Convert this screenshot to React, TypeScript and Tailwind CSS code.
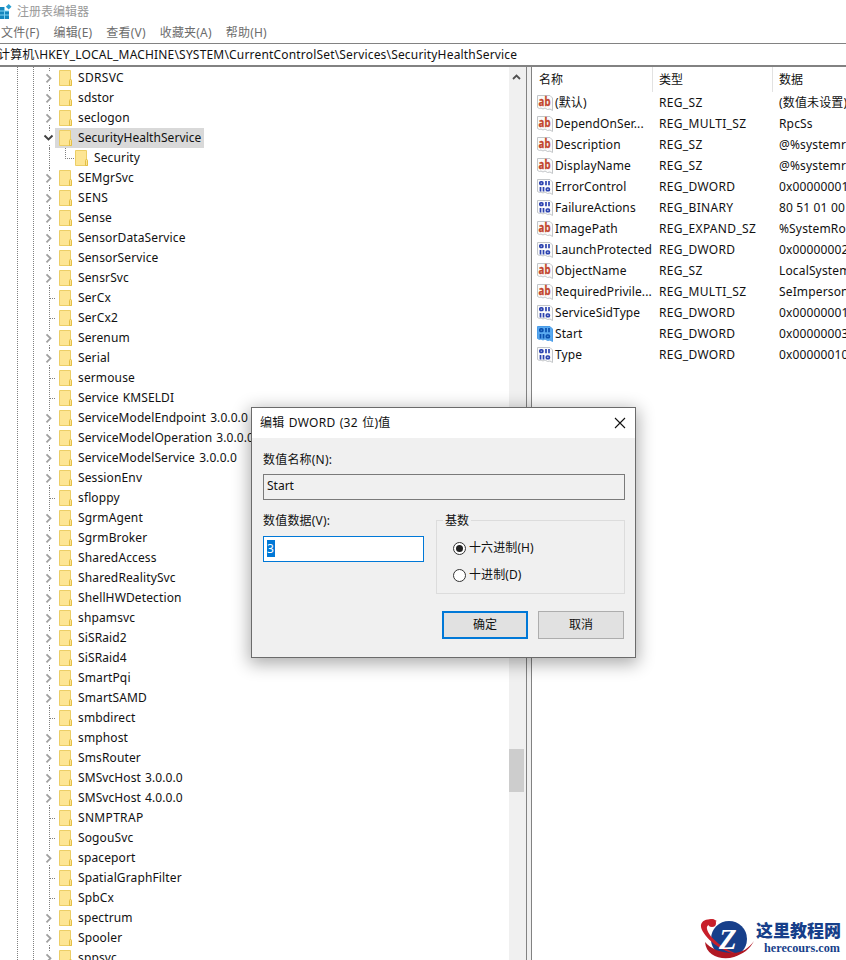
import React from 'react';

interface TreeItem {
  name: string;
  leaf?: boolean;
  open?: boolean;
  child?: boolean;
}

interface RegValue {
  name: string;
  type: string;
  data: string;
  kind: 'text' | 'binary';
  active?: boolean;
}

const tree: TreeItem[] = [
  { name: 'SDRSVC' },
  { name: 'sdstor' },
  { name: 'seclogon' },
  { name: 'SecurityHealthService', open: true },
  { name: 'Security', child: true },
  { name: 'SEMgrSvc' },
  { name: 'SENS' },
  { name: 'Sense' },
  { name: 'SensorDataService' },
  { name: 'SensorService' },
  { name: 'SensrSvc' },
  { name: 'SerCx', leaf: true },
  { name: 'SerCx2', leaf: true },
  { name: 'Serenum' },
  { name: 'Serial' },
  { name: 'sermouse', leaf: true },
  { name: 'Service KMSELDI', leaf: true },
  { name: 'ServiceModelEndpoint 3.0.0.0' },
  { name: 'ServiceModelOperation 3.0.0.0' },
  { name: 'ServiceModelService 3.0.0.0' },
  { name: 'SessionEnv' },
  { name: 'sfloppy', leaf: true },
  { name: 'SgrmAgent' },
  { name: 'SgrmBroker' },
  { name: 'SharedAccess' },
  { name: 'SharedRealitySvc' },
  { name: 'ShellHWDetection' },
  { name: 'shpamsvc' },
  { name: 'SiSRaid2' },
  { name: 'SiSRaid4' },
  { name: 'SmartPqi' },
  { name: 'SmartSAMD' },
  { name: 'smbdirect', leaf: true },
  { name: 'smphost' },
  { name: 'SmsRouter' },
  { name: 'SMSvcHost 3.0.0.0' },
  { name: 'SMSvcHost 4.0.0.0' },
  { name: 'SNMPTRAP', leaf: true },
  { name: 'SogouSvc', leaf: true },
  { name: 'spaceport' },
  { name: 'SpatialGraphFilter', leaf: true },
  { name: 'SpbCx', leaf: true },
  { name: 'spectrum' },
  { name: 'Spooler' },
  { name: 'sppsvc' },
];

const values: RegValue[] = [
  { name: '(默认)', type: 'REG_SZ', data: '(数值未设置)', kind: 'text' },
  { name: 'DependOnSer...', type: 'REG_MULTI_SZ', data: 'RpcSs', kind: 'text' },
  { name: 'Description', type: 'REG_SZ', data: '@%systemr', kind: 'text' },
  { name: 'DisplayName', type: 'REG_SZ', data: '@%systemr', kind: 'text' },
  { name: 'ErrorControl', type: 'REG_DWORD', data: '0x00000001', kind: 'binary' },
  { name: 'FailureActions', type: 'REG_BINARY', data: '80 51 01 00', kind: 'binary' },
  { name: 'ImagePath', type: 'REG_EXPAND_SZ', data: '%SystemRo', kind: 'text' },
  { name: 'LaunchProtected', type: 'REG_DWORD', data: '0x00000002', kind: 'binary' },
  { name: 'ObjectName', type: 'REG_SZ', data: 'LocalSystem', kind: 'text' },
  { name: 'RequiredPrivile...', type: 'REG_MULTI_SZ', data: 'SeImperson', kind: 'text' },
  { name: 'ServiceSidType', type: 'REG_DWORD', data: '0x00000001', kind: 'binary' },
  { name: 'Start', type: 'REG_DWORD', data: '0x00000003', kind: 'binary', active: true },
  { name: 'Type', type: 'REG_DWORD', data: '0x00000010', kind: 'binary' },
];

const menus = ['文件(F)', '编辑(E)', '查看(V)', '收藏夹(A)', '帮助(H)'];

const FolderIcon = () => (
  <svg width="14" height="16" viewBox="0 0 14 16" className="shrink-0">
    <path d="M.5.5h11v9l1 1v5H.5z" fill="#fde594" stroke="#ecce66" />
    <path d="M10.500 15.500v-5l1-1.500 1 1.500v5z" fill="#fde594" stroke="#e3bf45" />
  </svg>
);

const ValueIcon: React.FC<{ kind: RegValue['kind']; active?: boolean }> = ({ kind, active }) => (
  <svg width="16" height="16" viewBox="0 0 16 16" className="shrink-0">
    <path
      d="M.5.5h12.500l2.500 2.500v12.500l-2.500-1.500-2.500.5-2.500-1.500-2 1-2-1-1.500.5-2-1z"
      fill={active ? '#5aaaf0' : '#fbfbfb'}
      stroke={active ? '#4a9ce8' : '#c3c6c9'}
    />
    {kind === 'text' ? (
      <text x="1.600" y="11" fontSize="11.500" fontWeight="700" textLength="12" lengthAdjust="spacingAndGlyphs" fill="#c2452d" stroke="#c2452d" strokeWidth=".3" fontFamily="Noto Sans, sans-serif">ab</text>
    ) : (
      <g stroke={active ? '#0a4fae' : '#2c43b0'} strokeWidth="1.700" fill="none">
        <rect x="2.850" y="2.850" width="3" height="2.600" rx="1" />
        <path d="M9 2v4.300M12 2v4.300M3.500 8v4.500M6.500 8v4.500" />
        <rect x="9.350" y="9" width="3" height="2.700" rx="1" />
      </g>
    )}
  </svg>
);

const labelTracking = (name: string) => {
  if (/^[A-Z]+$/.test(name)) return 'tracking-[0.32px]';
  if (name.includes(' ')) return 'tracking-[0.08px]';
  return name.length > 20 ? 'tracking-[0.05px]' : 'tracking-[0.13px]';
};

const TreeLabel: React.FC<{ name: string }> = ({ name }) => (
  <span className={`ml-[5px] [word-spacing:1px] ${labelTracking(name)}`}>{name}</span>
);

const TreeRow: React.FC<{ item: TreeItem }> = ({ item }) => {
  if (item.child) {
    return (
      <div className="flex h-5 items-center">
        <span className="ml-[49px] h-5 w-4 border-l border-dotted border-[#808080]" />
        <span className="mb-[9px] h-[11px] w-[9px] border-b border-l border-dotted border-[#808080]" />
        <span className="ml-px flex items-center">
          <FolderIcon />
          <TreeLabel name={item.name} />
        </span>
      </div>
    );
  }
  return (
    <div className="flex h-5 items-center">
      <span className="ml-[43px] flex h-5 w-3 items-center">
        {item.leaf ? (
          <svg width="13" height="20" viewBox="0 0 13 20" className="shrink-0">
            <path d="M6.500 0v20M7 10.500h6" stroke="#808080" strokeDasharray="1 1" />
          </svg>
        ) : (
          <svg width="13" height="20" viewBox="0 0 13 20" fill="none" className="shrink-0">
            <path d="M6.500 0v4M6.500 17v3" stroke="#808080" strokeDasharray="1 1" />
            {item.open ? (
              <path d="M1.500 7.500l4 4 4-4" stroke="#404040" strokeWidth="1.900" />
            ) : (
              <path d="M3.500 6.300l4 4-4 4" stroke="#a0a0a0" strokeWidth="1.800" />
            )}
          </svg>
        )}
      </span>
      <span className={`flex h-5 items-center pl-1 pr-[3px] ${item.open ? 'bg-[#d9d9d9]' : ''}`}>
        <FolderIcon />
        <TreeLabel name={item.name} />
      </span>
    </div>
  );
};

const EditDialog = () => (
  <div className="absolute left-[251px] top-[407px] h-[251px] w-[385px] border border-[#6b6b6b] bg-[#f0f0f0] shadow-[0_4px_16px_2px_rgba(0,0,0,0.32)]">
    <div className="flex h-[30px] items-center justify-between bg-white pl-2 pr-[9px]">
      <span className="tracking-[0.25px] [word-spacing:1px]">编辑 DWORD (32 位)值</span>
      <svg width="12" height="12" viewBox="0 0 12 12" stroke="#111" strokeWidth="1.100" className="-mt-px">
        <path d="M1 1l10 10M11 1L1 11" />
      </svg>
    </div>
    <div className="px-[11px] pt-[13px]">
      <div className="h-[23px] leading-[18px] tracking-[0.2px]">数值名称(N):</div>
      <div className="h-[26px] w-[362px] border border-[#7a7a7a] pl-[3px] leading-[22px]">Start</div>
      <div className="flex pt-[12px]">
        <div className="w-[161px] shrink-0">
          <div className="h-[24px] leading-[18px] tracking-[0.2px]">数值数据(V):</div>
          <div className="flex h-[26px] border border-[#0078d7] bg-white pl-[3px] pt-[3px]">
            <span className="h-[17px] w-2 bg-[#0078d7] leading-[17px] text-white">3</span>
          </div>
        </div>
        <fieldset className="-mt-px ml-3 h-[83px] w-[189px] shrink-0 border border-[#dcdcdc] pl-4">
          <legend className="-ml-[10px] h-[18px] px-[2px] leading-[20px]">基数</legend>
          <div className="mt-[10px] flex h-[18px] items-center gap-[3px] tracking-[0.1px]">
            <span className="flex h-[13px] w-[13px] items-center justify-center rounded-full border border-[#333] bg-white">
              <span className="h-[7px] w-[7px] rounded-full bg-[#222]" />
            </span>
            十六进制(H)
          </div>
          <div className="mt-[9px] flex h-[18px] items-center gap-[3px] tracking-[0.1px]">
            <span className="h-[13px] w-[13px] rounded-full border border-[#333] bg-white" />
            十进制(D)
          </div>
        </fieldset>
      </div>
      <div className="-mr-px mt-[17px] flex gap-[10px] pl-[179px]">
        <button className="h-7 w-[86px] border-2 border-[#0078d7] bg-[#e1e1e1]">确定</button>
        <button className="h-7 w-[86px] border border-[#adadad] bg-[#e1e1e1]">取消</button>
      </div>
    </div>
  </div>
);

const Watermark = () => (
  <div className="absolute left-[698px] top-[916px] flex">
    <svg width="58" height="44" viewBox="0 0 58 44">
      <circle cx="31" cy="23" r="18" fill="#173f8a" />
      <path d="M19 5C11 1 2 4 3 11c2 10 21 26 37 27-13-4-29-16-31-25-1-4 4-6 10-8z" fill="#c8202b" />
      <path d="M7 26C8 40 24 45 36 41c9-3 16-8 20-16-5 7-12 12-21 12C23 37 13 33 7 26z" fill="#b01924" />
      <circle cx="14" cy="7" r="4" fill="#c8202b" />
      <text x="21" y="33" fontSize="29" fontWeight="700" fontStyle="italic" fill="#fff" fontFamily="Liberation Serif, serif">Z</text>
    </svg>
    <div className="pt-[3px] text-[#173f8a]">
      <div className="font-['Noto_Sans_CJK_SC',sans-serif] text-[17px] font-black leading-[22px]">这里教程网</div>
      <div className="pl-2 font-['Liberation_Serif',serif] text-[12.2px] font-bold leading-[14px]">herecours.com</div>
    </div>
  </div>
);

const App = () => (
  <div className="relative flex h-[960px] w-[846px] flex-col overflow-hidden whitespace-nowrap bg-white font-['Noto_Sans','Noto_Sans_CJK_SC',sans-serif] text-[12px] text-[#111]">
    <div className="flex h-[23px] shrink-0 items-center text-[#999]">
      <svg width="12" height="16" viewBox="0 0 12 16">
        <path d="M0 3h5v4h4v8H0z" fill="#1687bd" />
        <path d="M0 7h9M0 11h9M4.500 3v12" stroke="#7fd2f2" />
        <path d="M8.700 0l2.800 2.800-2.800 2.800-2.800-2.800z" fill="#2b9fd0" />
      </svg>
      <span className="ml-[5px]">注册表编辑器</span>
    </div>
    <div className="flex h-[20px] shrink-0 items-center gap-[14px] pl-px tracking-[0.2px] text-[#6d6d6d]">
      {menus.map((menu) => (
        <span key={menu}>{menu}</span>
      ))}
    </div>
    <div className="h-[24px] shrink-0 border-b-2 border-t border-[#828282] leading-[21px] tracking-[0.18px]">
      <span className="-ml-[2px]">计算机\HKEY_LOCAL_MACHINE\SYSTEM\CurrentControlSet\Services\SecurityHealthService</span>
    </div>

    <div className="flex min-h-0 flex-1">
      <div className="flex w-[527px] border-r border-[#828282]">
        <div className="relative flex-1 overflow-hidden pt-px">
          <span className="absolute left-[17px] top-0 h-full border-l border-dotted border-[#808080]" />
          <span className="absolute left-[33px] top-0 h-full border-l border-dotted border-[#808080]" />
          {tree.map((item) => (
            <TreeRow key={item.name} item={item} />
          ))}
        </div>
        <div className="flex w-[17px] flex-col items-start bg-[#f0f0f0]">
          <svg width="9" height="6" viewBox="0 0 9 6" fill="none" className="ml-[3px] mt-[7px] shrink-0">
            <path d="M1 5l3.500-3.500L8 5" stroke="#505050" strokeWidth="1.800" />
          </svg>
          <span className="mt-[669px] h-[43px] w-[15px] shrink-0 bg-[#cdcdcd]" />
        </div>
      </div>
      <div className="w-1 bg-[#f0f0f0]" />
      <div className="flex-1 overflow-hidden border-l border-[#828282]">
        <div className="flex h-[25px] leading-[25px]">
          <span className="w-[121px] border-r border-[#e2e2e2] pl-[7px]">名称</span>
          <span className="w-[120px] border-r border-[#e2e2e2] pl-[6px]">类型</span>
          <span className="pl-[6px]">数据</span>
        </div>
        {values.map((value) => (
          <div key={value.name} className="flex h-[21px] items-center">
            <span className="flex w-[127px] shrink-0 items-center gap-[2px] pl-[5px] tracking-[0.1px]">
              <ValueIcon kind={value.kind} active={value.active} />
              {value.name}
            </span>
            <span className="w-[120px] shrink-0 tracking-[0.33px]">{value.type}</span>
            <span className="tracking-[0.15px]">{value.data}</span>
          </div>
        ))}
      </div>
    </div>

    <EditDialog />
    <Watermark />
  </div>
);

export default App;
